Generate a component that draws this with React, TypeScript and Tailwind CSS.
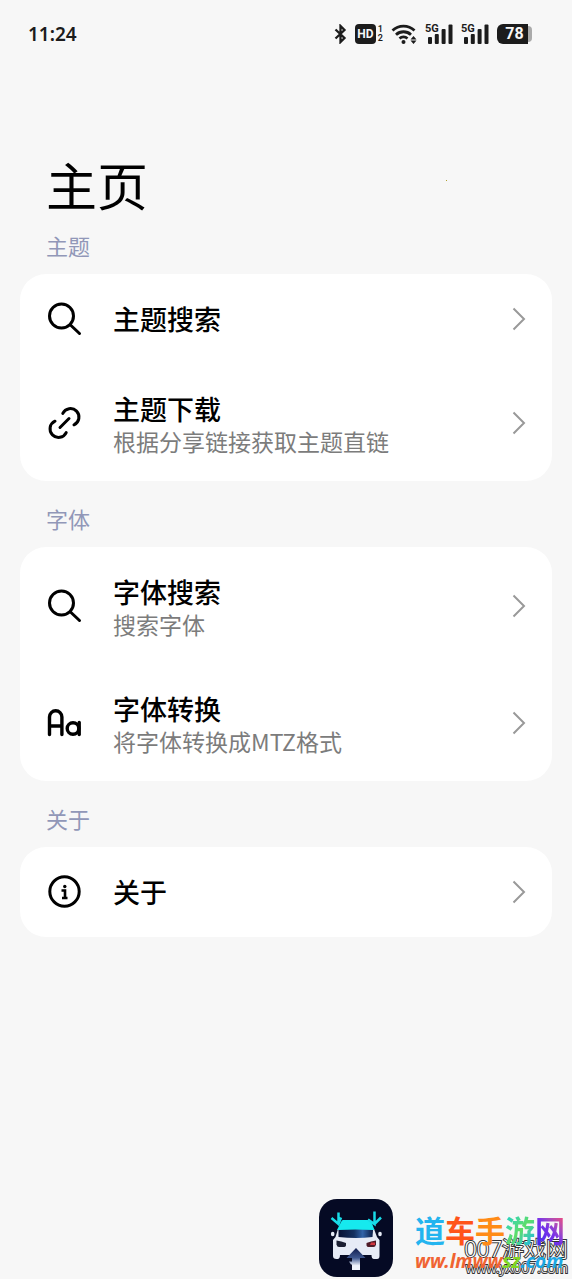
import type { ReactNode } from "react";

function SearchIcon() {
  return (
    <svg viewBox="0 0 36 36" className="size-9" fill="none" stroke="#000" strokeWidth="3" strokeLinecap="round" aria-hidden="true">
      <circle cx="14.5" cy="15" r="12" />
      <path d="M23.500 24 32.500 32.500" />
    </svg>
  );
}

function LinkIcon() {
  return (
    <svg viewBox="0 0 36 36" className="size-9" fill="none" stroke="#000" strokeWidth="3" strokeLinecap="round" aria-hidden="true">
      <path d="M13 22.500 22 13.500" />
      <path d="M15.800 8.400A8.500 8.500 0 1 1 27 19.800" />
      <path d="M19.200 27.600A8.500 8.500 0 1 1 8 16.200" />
    </svg>
  );
}

function FontIcon() {
  return (
    <svg viewBox="0 0 36 36" className="size-9" fill="none" stroke="#000" strokeWidth="3.400" strokeLinecap="round" aria-hidden="true">
      <path d="M2.500 29.500V12a6.200 6.200 0 0 1 12.400 0v17.500M2.500 21h12.400" />
      <circle cx="26" cy="23.500" r="5.800" />
      <path d="M32.200 17.500v12" />
    </svg>
  );
}

function InfoIcon() {
  return (
    <svg viewBox="0 0 36 36" className="size-9" fill="none" stroke="#000" strokeWidth="3" aria-hidden="true">
      <circle cx="17.500" cy="17.500" r="14.700" />
      <path d="M14.500 16.500h3.500v7.500M15 24h5.500" strokeWidth="2.600" />
      <circle cx="17.800" cy="12.500" r="1.700" fill="#000" stroke="none" />
    </svg>
  );
}

function Chevron() {
  return (
    <svg viewBox="0 0 14 24" className="h-6 w-3.5 shrink-0" fill="none" stroke="#999" strokeWidth="2" aria-hidden="true">
      <path d="M1.500 1.500 12 12 1.500 22.500" />
    </svg>
  );
}

function Signal() {
  return (
    <div className="relative h-5 w-7">
      <svg viewBox="0 0 28 20" className="h-5 w-7" fill="#1c1c1c" aria-hidden="true">
        <rect x="3" y="13" width="4" height="7" rx="1" />
        <rect x="9.800" y="10" width="4" height="10" rx="1" />
        <rect x="16.600" y="5" width="4" height="15" rx="1" />
        <rect x="23.500" y="0.500" width="4" height="19.500" rx="1" />
      </svg>
      <span className="absolute top-0 left-0 text-[11px] leading-[9px] font-bold">5G</span>
    </div>
  );
}

function StatusBar() {
  return (
    <header className="flex h-[68px] items-center justify-between pr-10 pl-7 text-[#1c1c1c]">
      <time className="font-['Noto_Sans',sans-serif] text-[19px] font-semibold">11:24</time>
      <div className="flex items-center gap-2 font-['Roboto',sans-serif]">
        <svg viewBox="0 0 14 20" className="h-5 w-3.5" fill="none" stroke="#1c1c1c" strokeWidth="2.300" aria-hidden="true">
          <path d="M2.500 5.500 11.500 14 7.500 18V2L11.500 6 2.500 14.500" />
        </svg>
        <div className="flex items-center">
          <span className="flex h-5 w-[21px] items-center justify-center rounded bg-[#1c1c1c] text-[12px] font-bold text-[#f7f7f7]">HD</span>
          <span className="ml-0.5 flex flex-col text-[9px] leading-[9px] font-semibold">
            <span>1</span>
            <span>2</span>
          </span>
        </div>
        <svg viewBox="0 0 26 20" className="h-5 w-[26px]" fill="none" stroke="#1c1c1c" strokeWidth="2.800" aria-hidden="true">
          <path d="M1.500 6.500a16 16 0 0 1 22 0M5 10.700a11 11 0 0 1 15 0M8.500 14.500a6 6 0 0 1 8 0" />
          <circle cx="12.500" cy="18" r="2" fill="#1c1c1c" stroke="none" />
          <path d="M22.500 12 25.500 15.500h-6zM22.500 20l3-3.500h-6z" fill="#1c1c1c" stroke="none" />
        </svg>
        <Signal />
        <Signal />
        <div className="flex items-center">
          <span className="flex h-5 w-[31px] items-center justify-center rounded-l-md bg-[#1c1c1c] pl-1 text-[16px] font-bold text-[#f7f7f7]">78</span>
          <span className="h-4 w-1 rounded-r-full bg-[#aaa]" />
        </div>
      </div>
    </header>
  );
}

type RowProps = { icon: ReactNode; title: string; note?: string };

function Row({ icon, title, note }: RowProps) {
  return (
    <li>
      <button
        type="button"
        className={`flex w-full items-center pr-[26px] pl-[27px] text-left ${note ? "h-[117px]" : "h-[90px]"}`}
      >
        <span className="w-[66px] shrink-0">{icon}</span>
        <span className={`flex min-w-0 flex-1 flex-col ${note ? "pt-1" : ""}`}>
          <span className="text-[27px] leading-8 font-medium text-black">{title}</span>
          {note && <span className="text-[23px] leading-8 font-normal text-[#7c7c7c]">{note}</span>}
        </span>
        <Chevron />
      </button>
    </li>
  );
}

function Section({ label, children }: { label: string; children: ReactNode }) {
  return (
    <section className="px-5">
      <h2 className="flex h-[66px] items-center pt-2 pl-[26px] text-[22px] text-[#9197b8]">{label}</h2>
      <ul className="rounded-[26px] bg-white">{children}</ul>
    </section>
  );
}

function AppBadge() {
  return (
    <svg viewBox="0 0 74 78" className="h-[78px] w-[74px]" aria-hidden="true">
      <defs>
        <linearGradient id="shade" x1="0" y1="0" x2="1" y2="0">
          <stop offset="0" stopColor="#071235" />
          <stop offset="0.450" stopColor="#14305f" />
          <stop offset="0.700" stopColor="#3163a8" />
          <stop offset="1" stopColor="#0a1c45" />
        </linearGradient>
        <linearGradient id="ramp" x1="0" y1="0" x2="0" y2="1">
          <stop offset="0" stopColor="#101c4c" />
          <stop offset="0.450" stopColor="#3d568e" />
          <stop offset="0.800" stopColor="#eef2fa" />
        </linearGradient>
      </defs>
      <rect width="74" height="78" rx="18" fill="#050a24" />
      <path d="M16.500 38 19 30h36l3 8 2.500 3v16q0 3-2.500 3h-3q-2.500 0-2.500-4H21q0 4-2.500 4h-1q-3.500 0-3.500-3V41z" fill="#e6ebf6" />
      <path d="M24 21h26q1.500 0 2.500 2l3 8H18l4-8q.800-2 2-2z" fill="#16e9ee" />
      <path d="M19.500 31q17-1 34.500 0l-.500 7q-16 2-34 0z" fill="url(#shade)" />
      <path d="M17.500 41.500q5 .500 9.500 2.500v2.500q-.500 1.500-2 1.500h-5q-2 0-2.500-2.500z" fill="#1a1e32" />
      <path d="M57 41.500q-5 .500-9.500 2.500v2.500q.500 1.500 2 1.500h5q2 0 2.500-2.500z" fill="#4e1b28" />
      <path d="M52 43.500h4v2.500h-5z" fill="#d13640" />
      <ellipse cx="13.700" cy="35" rx="1.800" ry="2.300" fill="#e6ebf6" />
      <ellipse cx="61" cy="35" rx="1.800" ry="2.300" fill="#e6ebf6" />
      <path d="M37 49 46.500 59H41v12h-8v-5.500h-1L30 62.500h3V59h-5.500z" fill="url(#ramp)" />
      <path d="M19.500 13.500V25L12.500 19M19.500 25 22 18.500M55.500 12.500V25L49 20.500M55.500 25 62 18.500" fill="none" stroke="#18dce8" strokeWidth="2.500" />
    </svg>
  );
}

function Watermark() {
  return (
    <footer className="mt-auto flex items-start justify-end pr-1 font-['Noto_Sans','Noto_Sans_CJK_SC',sans-serif]">
      <AppBadge />
      <div className="relative ml-[22px] h-20 w-[153px] whitespace-nowrap">
        <div className="absolute top-[35px] right-0 text-right font-light text-white [-webkit-text-stroke:2px_#333] [paint-order:stroke_fill]">
          <p className="text-[22px] leading-7">007游戏网</p>
          <p className="text-[14px] leading-3">www.yx007.com</p>
        </div>
        <p className="absolute top-4 left-0 flex text-[30px] leading-8 font-bold">
          <span className="text-[#24b4ef]">道</span>
          <span className="text-[#ff5419]">车</span>
          <span className="text-[#ff8b16]">手</span>
          <span className="bg-linear-to-br from-[#19cfc9] via-[#5ddd66] to-[#14aef0] bg-clip-text text-transparent">游</span>
          <span className="bg-linear-to-tr from-[#3527f0] via-[#7930e8] to-[#ff3c68] bg-clip-text text-transparent">网</span>
        </p>
        <p className="absolute top-[50px] left-0 text-[19px] leading-6 font-bold italic">
          <span className="text-[#f06432]">ww.lmww</span>
          <span className="text-[#80d822]">sz</span>
          <span className="text-[#1ba7e5]">.com</span>
        </p>
      </div>
    </footer>
  );
}

export default function App() {
  return (
    <div className="flex min-h-screen flex-col overflow-x-hidden bg-[#f7f7f7] font-['Noto_Sans_CJK_SC',sans-serif]">
      <StatusBar />
      <main>
        <div className="flex items-start justify-between pt-[92px] pr-[125px] pl-[46px]">
          <h1 className="text-[51px] leading-12 font-normal text-black">主页</h1>
          <span className="mt-5 size-px bg-[#b0a030]" />
        </div>
        <Section label="主题">
          <Row icon={<SearchIcon />} title="主题搜索" />
          <Row icon={<LinkIcon />} title="主题下载" note="根据分享链接获取主题直链" />
        </Section>
        <Section label="字体">
          <Row icon={<SearchIcon />} title="字体搜索" note="搜索字体" />
          <Row icon={<FontIcon />} title="字体转换" note="将字体转换成MTZ格式" />
        </Section>
        <Section label="关于">
          <Row icon={<InfoIcon />} title="关于" />
        </Section>
      </main>
      <Watermark />
    </div>
  );
}
